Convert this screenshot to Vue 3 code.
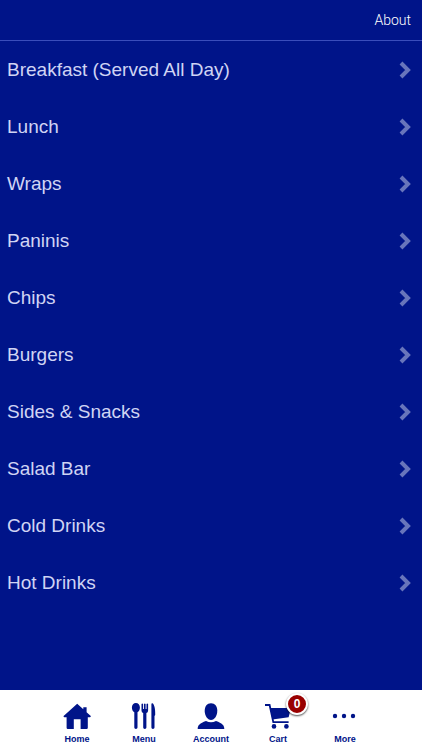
<script setup>
const categories = [
  'Breakfast (Served All Day)',
  'Lunch',
  'Wraps',
  'Paninis',
  'Chips',
  'Burgers',
  'Sides & Snacks',
  'Salad Bar',
  'Cold Drinks',
  'Hot Drinks',
]
const cartCount = 0
</script>

<template>
  <div class="screen">
    <header class="topbar">
      <a class="about" href="#about">About</a>
    </header>

    <main class="content">
      <ul class="list">
        <li v-for="name in categories" :key="name">
          <a class="row" href="#category">
            <span>{{ name }}</span>
            <svg class="chevron" viewBox="0 0 12 18" aria-hidden="true">
              <path d="M2 2 L9 9 L2 16" fill="none" stroke="currentColor" stroke-width="4" />
            </svg>
          </a>
        </li>
      </ul>
    </main>

    <nav class="tabs">
      <a class="tab" href="#home">
        <svg class="icon" viewBox="0 0 28 28" aria-hidden="true">
          <path d="M14.2 1.8 L20.3 7.2 V5.2 H23.6 V10.2 L27.8 14 Q28 15 27 15.2 H24.8 V25.8 Q24.8 27 23.6 27 H17.6 V17.2 H10.8 V27 H4.8 Q3.6 27 3.6 25.8 V15.2 H1.3 Q0.3 15 0.6 14 Z" />
        </svg>
        <span>Home</span>
      </a>
      <a class="tab" href="#menu">
        <svg class="icon" viewBox="0 0 28 28" aria-hidden="true">
          <path d="M5.9 1 C8.2 1 9.9 3.1 9.9 5.6 C9.9 7.9 8.9 9.4 7.5 10.3 V25.6 Q7.5 27 5.9 27 Q4.3 27 4.3 25.6 V10.3 C2.9 9.4 1.9 7.9 1.9 5.6 C1.9 3.1 3.6 1 5.9 1 Z" />
          <path d="M11.5 2 Q12.3 1 13.1 2 V7 H14 V2 Q14.8 1 15.6 2 V7 H16.5 V2 Q17.3 1 18.1 2 V8.4 Q18.1 10.4 16.4 11 V25.6 Q16.4 27 14.8 27 Q13.2 27 13.2 25.6 V11 Q11.5 10.4 11.5 8.4 Z" />
          <path d="M21.4 2.2 Q21.4 1 22.5 1.3 C24.4 2.5 25.4 7 25.2 13 L24.5 14 V25.6 Q24.5 27 22.9 27 Q21.4 27 21.4 25.6 Z" />
        </svg>
        <span>Menu</span>
      </a>
      <a class="tab" href="#account">
        <svg class="icon" viewBox="0 0 28 28" aria-hidden="true">
          <path d="M14 1.2 C18 1.2 20.3 4.2 20.3 8.8 C20.3 13.6 17.6 18 14 18 C10.4 18 7.7 13.6 7.7 8.8 C7.7 4.2 10 1.2 14 1.2 Z" />
          <path d="M0.7 27 C0.7 23 2.8 21.4 9 19 Q14 21.4 19 19 C25.2 21.4 27.3 23 27.3 27 Z" />
        </svg>
        <span>Account</span>
      </a>
      <a class="tab" href="#cart">
        <span class="cart">
          <svg class="icon" viewBox="0 0 28 28" aria-hidden="true">
            <path d="M1 3 H5.6 L9.3 20.2 H24.6" fill="none" stroke="currentColor" stroke-width="1.8" />
            <path d="M6.2 6 H27 L24.6 15.2 L8.4 17.6 Z" />
            <circle cx="10" cy="24.4" r="2.3" />
            <circle cx="22.4" cy="24.4" r="2.3" />
          </svg>
          <span class="badge">{{ cartCount }}</span>
        </span>
        <span>Cart</span>
      </a>
      <a class="tab" href="#more">
        <svg class="icon" viewBox="0 0 28 28" aria-hidden="true">
          <circle cx="4" cy="14" r="2.2" />
          <circle cx="13" cy="14" r="2.2" />
          <circle cx="22" cy="14" r="2.2" />
        </svg>
        <span>More</span>
      </a>
    </nav>
  </div>
</template>

<style>
body {
  margin: 0;
  background: #001489;
}
</style>

<style scoped>
.screen {
  display: flex;
  flex-direction: column;
  min-height: 100vh;
  background: #001489;
  font-family: "Liberation Sans", Arial, sans-serif;
}
a {
  color: inherit;
  text-decoration: none;
}
.topbar {
  display: flex;
  align-items: center;
  justify-content: flex-end;
  height: 40px;
  padding: 0 11px;
  border-bottom: 1px solid #3a4dbb;
  color: #fff;
}
.about {
  font-family: Roboto, "Liberation Sans", sans-serif;
  font-size: 14px;
  font-weight: 300;
  line-height: 20px;
}
.content {
  flex: 1;
}
.list {
  margin: 0;
  padding: 0;
  list-style: none;
}
.row {
  display: flex;
  align-items: center;
  justify-content: space-between;
  height: 57px;
  padding: 0 11px 0 7px;
  color: #d0d4f4;
  font-size: 19px;
}
.chevron {
  width: 12px;
  height: 18px;
  color: #6875bb;
}
.tabs {
  display: flex;
  justify-content: center;
  height: 60px;
  background: #fff;
  color: #001489;
}
.tab {
  display: flex;
  flex-direction: column;
  align-items: center;
  gap: 3px;
  width: 67px;
  padding-top: 12px;
  font-size: 9px;
  font-weight: 700;
  line-height: 12px;
}
.icon {
  display: block;
  width: 28px;
  height: 28px;
  fill: currentColor;
}
.cart {
  position: relative;
}
.badge {
  position: absolute;
  top: -9px;
  right: -16px;
  width: 18px;
  height: 18px;
  border: 2px solid #fff;
  border-radius: 50%;
  background: #990000;
  box-shadow: 0 1px 2px rgba(0, 0, 0, 0.7);
  color: #fff;
  font-size: 12px;
  line-height: 18px;
  text-align: center;
}
</style>
